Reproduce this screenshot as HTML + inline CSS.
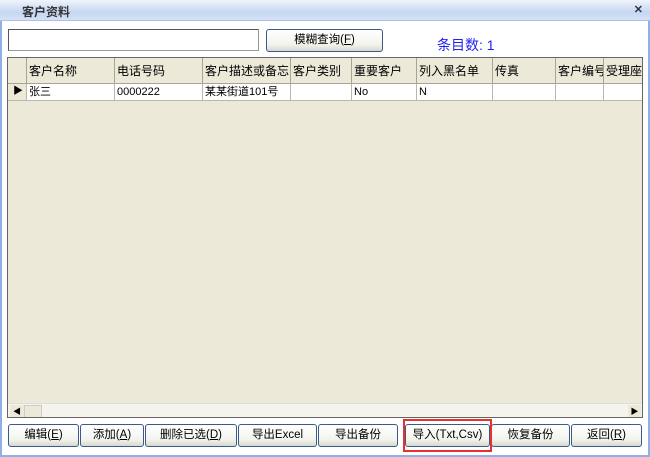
<!DOCTYPE html>
<html><head><meta charset="utf-8"><style>
*{box-sizing:border-box;margin:0;padding:0}
body{width:650px;height:457px;overflow:hidden;font-family:"Liberation Sans","Noto Sans CJK SC",sans-serif;font-size:12px;color:#000;background:#fff;position:relative}
.win{position:absolute;left:0;top:0;width:650px;height:457px;border:2px solid #8fb0e6;border-top:none;background:#fff}
.title{position:absolute;left:0;top:0;width:650px;height:21px;background:linear-gradient(#f0f4fc,#c6d6f2 60%,#d5e1f6);border-bottom:1px solid #a9c0e8}
.title span{position:absolute;left:22px;top:3px;font-size:12px;font-weight:bold;color:#333}
.title b{position:absolute;right:7px;top:3px;font-size:11px;color:#334}
.abs{position:absolute}
.tb{left:8px;top:29px;width:251px;height:22px;border:1px solid #555;border-right-color:#999;border-bottom-color:#999;background:#fff}
.btn{position:absolute;height:23px;border:1px solid #3a5a8a;border-radius:3px;background:linear-gradient(#fff,#f3f3ee 70%,#d8d8cf);text-align:center;line-height:21px;font-size:11.5px}
.grid{left:7px;top:57px;width:636px;height:361px;border:1px solid #666;background:#ece9d8;overflow:hidden}
.cell{position:absolute;border-right:1px solid #bcb8a6;border-bottom:1px solid #bcb8a6;padding-left:2px;white-space:nowrap;overflow:hidden}
.h{top:0;height:26px;line-height:26px;background:#ece9d8;border-right:1px solid #a9a592;border-bottom:1px solid #a9a592}
.d{top:26px;height:17px;line-height:16px;background:#fff;font-size:11px}
.sb{left:0;top:345px;width:634px;height:15px;background:#f4f3ee;border-top:1px solid #ddd}
</style></head><body>
<div class="win"></div>
<div class="title"><span>客户资料</span><b>✕</b></div>
<div class="abs tb"></div>
<div class="btn" style="left:266px;top:29px;width:117px">模糊查询(<u>F</u>)</div>
<div class="abs" style="left:437px;top:35px;color:#2222ee;font-size:14px">条目数: 1</div>
<div class="abs grid">
<div class="cell h" style="left:0;width:19px"></div>
<div class="cell h" style="left:19px;width:88px">客户名称</div>
<div class="cell h" style="left:107px;width:88px">电话号码</div>
<div class="cell h" style="left:195px;width:88px">客户描述或备忘</div>
<div class="cell h" style="left:283px;width:61px">客户类别</div>
<div class="cell h" style="left:344px;width:65px">重要客户</div>
<div class="cell h" style="left:409px;width:76px">列入黑名单</div>
<div class="cell h" style="left:485px;width:63px">传真</div>
<div class="cell h" style="left:548px;width:48px">客户编号</div>
<div class="cell h" style="left:596px;width:50px">受理座席</div>
<div class="cell d" style="left:0;width:19px;background:#ece9d8;font-size:10px;padding-left:5px">▶</div>
<div class="cell d" style="left:19px;width:88px">张三</div>
<div class="cell d" style="left:107px;width:88px">0000222</div>
<div class="cell d" style="left:195px;width:88px">某某街道101号</div>
<div class="cell d" style="left:283px;width:61px"></div>
<div class="cell d" style="left:344px;width:65px">No</div>
<div class="cell d" style="left:409px;width:76px">N</div>
<div class="cell d" style="left:485px;width:63px"></div>
<div class="cell d" style="left:548px;width:48px"></div>
<div class="cell d" style="left:596px;width:50px"></div>
<div class="abs sb">
<div class="abs" style="left:2px;top:1px;width:14px;height:13px;background:#ece9d8;font-size:8px;line-height:13px;text-align:center">◀</div>
<div class="abs" style="left:16px;top:1px;width:18px;height:13px;background:#ece9d8;border:1px solid #ccc"></div>
<div class="abs" style="left:620px;top:1px;width:13px;height:13px;background:#ece9d8;font-size:8px;line-height:13px;text-align:center">▶</div>
</div>
</div>
<div class="btn" style="left:8px;top:424px;width:71px">编辑(<u>E</u>)</div>
<div class="btn" style="left:80px;top:424px;width:64px">添加(<u>A</u>)</div>
<div class="btn" style="left:145px;top:424px;width:92px">删除已选(<u>D</u>)</div>
<div class="btn" style="left:238px;top:424px;width:79px">导出Excel</div>
<div class="btn" style="left:318px;top:424px;width:80px">导出备份</div>
<div class="btn" style="left:405px;top:424px;width:85px">导入(Txt,Csv)</div>
<div class="btn" style="left:491px;top:424px;width:79px">恢复备份</div>
<div class="btn" style="left:571px;top:424px;width:71px">返回(<u>R</u>)</div>
<div class="abs" style="left:403px;top:419px;width:89px;height:33px;border:2px solid #e8302c"></div>
</body></html>
